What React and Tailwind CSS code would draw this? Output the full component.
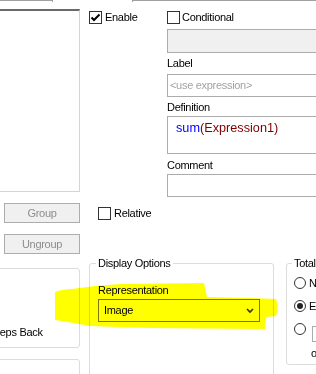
const CheckBox = ({ checked }) => (
  <span className="w-[13px] h-[13px] shrink-0 border border-[#333333] bg-white flex items-center justify-center">
    {checked && (
      <svg width="11" height="11" viewBox="0 0 11 11">
        <path d="M1.5 5.5 L4 8 L9.5 2.5" fill="none" stroke="#000" strokeWidth="2" />
      </svg>
    )}
  </span>
);

const Radio = ({ checked }) => (
  <span className="w-[12px] h-[12px] shrink-0 rounded-full border border-[#333333] bg-white flex items-center justify-center">
    {checked && <span className="w-[6px] h-[6px] rounded-full bg-[#222222]" />}
  </span>
);

const Chevron = () => (
  <svg width="8" height="6" viewBox="0 0 8 6">
    <path d="M1 1 L4 4 L7 1" fill="none" stroke="#333" strokeWidth="1.6" />
  </svg>
);

export default function App() {
  return (
    <div className="relative w-[316px] h-[374px] overflow-hidden bg-white text-black text-[11px] leading-[13px] tracking-[-0.3px] font-['Liberation_Sans',Arial,sans-serif]">
      {/* tab strip edge */}
      <div className="flex h-[2px]">
        <div className="w-[53px] shrink-0 border-t border-r border-[#a0a0a0]" />
        <div className="w-[79px] shrink-0" />
        <div className="flex-1 border-t border-l border-[#a0a0a0]" />
      </div>

      {/* upper area */}
      <div className="mt-[7px]">
        <div className="flex">
          <div className="w-[80px] h-[183px] mr-[9px] shrink-0 border-t-2 border-t-[#6a6a6a] border-r border-b border-[#d4d4d4]" />
          <div className="w-[78px] shrink-0 pt-[2px]">
            <label className="flex items-center gap-[3px]">
              <CheckBox checked />
              <span>Enable</span>
            </label>
          </div>
          <div className="w-[170px] shrink-0 pt-[2px] flex flex-col">
            <label className="flex items-center gap-[2px]">
              <CheckBox />
              <span>Conditional</span>
            </label>
            <div className="mt-[5px] h-[24px] border border-[#acacac] bg-[#f0f0f0]" />
            <div className="mt-[4px]">Label</div>
            <div className="mt-[4px] h-[23px] border border-[#acacac] pl-[2px] flex items-center text-[#a3a3a3]">
              &lt;use expression&gt;
            </div>
            <div className="mt-[4px]">Definition</div>
            <div className="mt-[2px] h-[38px] border border-[#acacac] pl-[8px] pt-[4px] text-[12.7px] leading-[15px] tracking-normal">
              <span className="text-[#0000ff]">sum</span>
              <span className="text-[#800000]">(Expression1)</span>
            </div>
            <div className="mt-[5px]">Comment</div>
            <div className="mt-[2px] h-[23px] border border-[#acacac]" />
          </div>
        </div>

        <div className="flex items-center mt-[6px]">
          <button className="ml-[4px] w-[76px] h-[20px] shrink-0 border border-[#adadad] bg-[#f0f0f0] text-[#8d8d8d]">
            Group
          </button>
          <label className="ml-[18px] flex items-center gap-[3px]">
            <CheckBox />
            <span>Relative</span>
          </label>
        </div>
        <button className="mt-[11px] ml-[4px] w-[76px] h-[20px] border border-[#adadad] bg-[#f0f0f0] text-[#8d8d8d]">
          Ungroup
        </button>
      </div>

      {/* lower area */}
      <div className="mt-[3px] flex items-start">
        <div className="w-[80px] shrink-0 flex flex-col">
          <div className="mt-[11px] -ml-[20px] w-[100px] h-[80px] shrink-0 border border-[#dcdcdc] rounded-[3px] pl-[9px] pt-[57px] whitespace-nowrap">
            Steps Back
          </div>
          <div className="mt-[11px] -ml-[20px] w-[100px] h-[60px] shrink-0 border border-[#dcdcdc] rounded-[3px]" />
        </div>

        <fieldset className="ml-[9px] w-[185px] h-[200px] shrink-0 border border-[#dcdcdc] rounded-[3px]">
          <legend className="ml-[6px] px-[2px]">Display Options</legend>
          <div className="pl-[8px] pt-[14px]">
            <div>Representation</div>
            <div className="mt-[2px] w-[162px] h-[23px] border border-[#7a7a7a] bg-white pl-[5px] pr-[5px] flex items-center justify-between">
              <span>Image</span>
              <Chevron />
            </div>
          </div>
        </fieldset>

        <fieldset className="ml-[12px] w-[100px] h-[108px] shrink-0 border border-[#dcdcdc] rounded-[3px]">
          <legend className="ml-[5px] px-[2px] whitespace-nowrap">Totals Mode</legend>
          <div className="pl-[7px] pt-[7px] flex flex-col gap-[11px]">
            <label className="flex items-center gap-[3px] h-[12px] whitespace-nowrap">
              <Radio />
              <span>No Totals</span>
            </label>
            <label className="flex items-center gap-[3px] h-[12px] whitespace-nowrap">
              <Radio checked />
              <span>Expression Total</span>
            </label>
            <div className="flex items-start">
              <Radio />
              <div className="flex flex-col ml-[6px]">
                <div className="mt-[3px] w-[60px] h-[16px] border border-[#acacac]" />
                <div className="mt-[5px] -ml-px whitespace-nowrap">of rows</div>
              </div>
            </div>
          </div>
        </fieldset>
      </div>

      {/* highlighter stroke */}
      <svg className="absolute inset-0 pointer-events-none mix-blend-multiply" width="316" height="374" viewBox="0 0 316 374">
        <path
          d="M55 292 C60 290 66 289 72 289 L95 286 L120 284 L204 283 L207 297 L250 298 L276 299 Q279 308 276 316 L266 317 L265 329 L150 328 L90 326 L62 321 L55 320 Z"
          fill="#ffff00"
        />
      </svg>
    </div>
  );
}
